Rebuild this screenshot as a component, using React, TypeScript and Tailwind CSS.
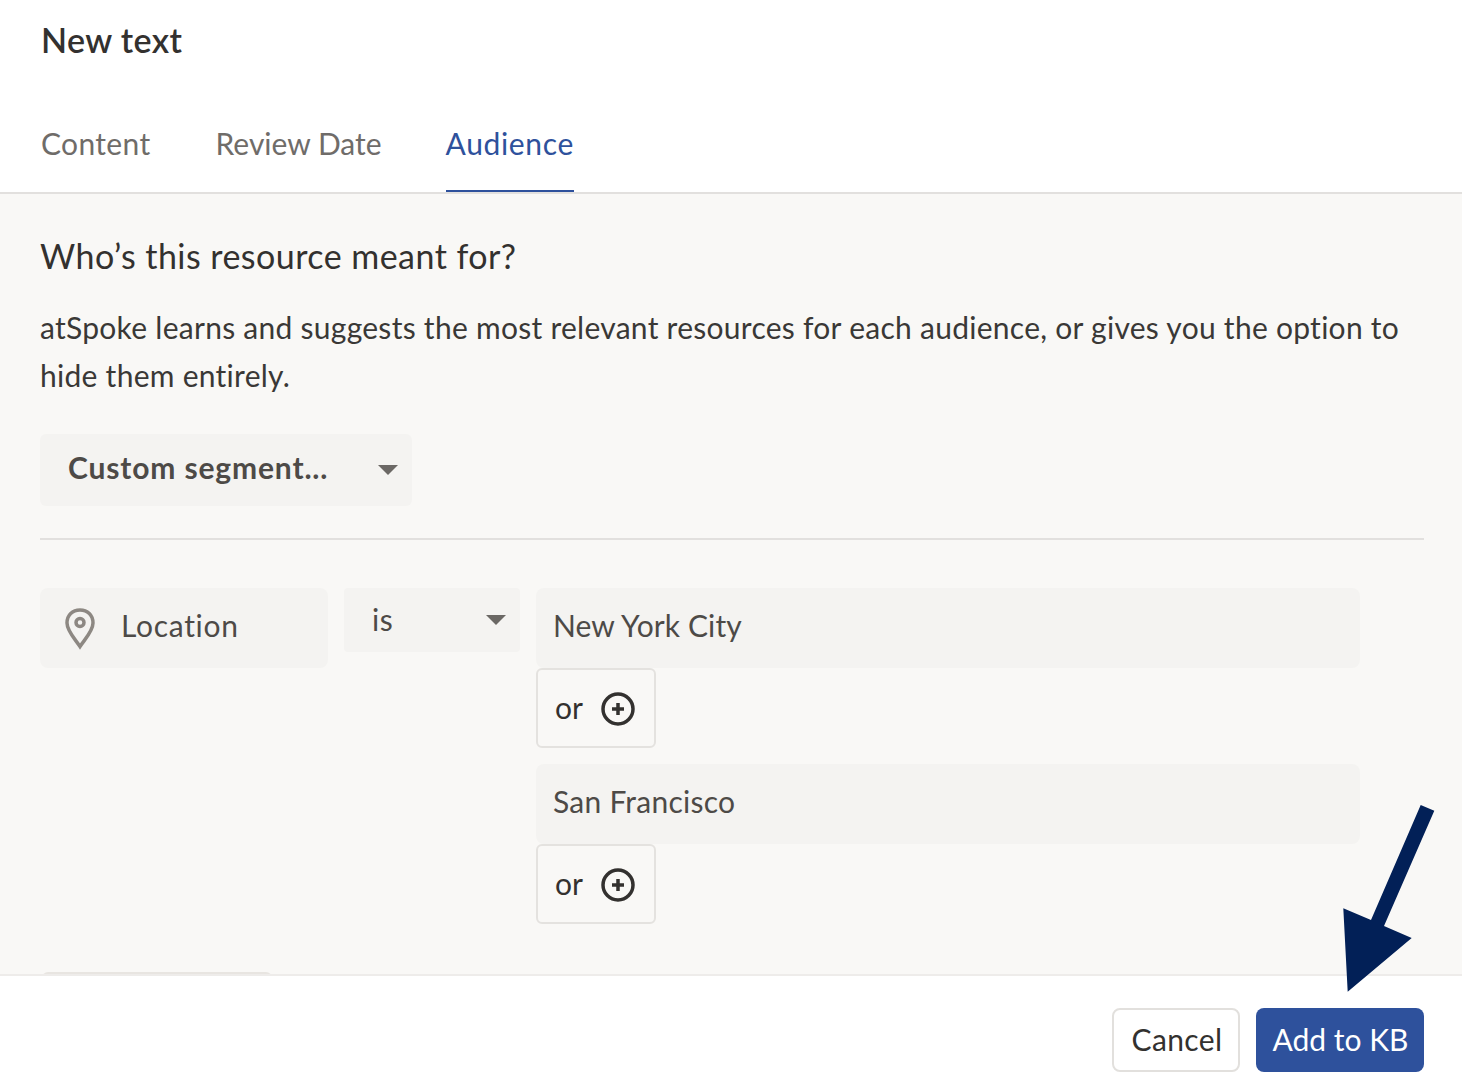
import React from "react";

function Caret({ className }: { className: string }) {
  return (
    <svg className={className} width="20" height="10" viewBox="0 0 20 10">
      <path d="M0 0H20L10 10Z" fill="#6b6865" />
    </svg>
  );
}

function Or() {
  return (
    <div className="flex h-20 w-[120px] items-center rounded-md border-2 border-[#e4e2df] pl-[17px] text-[30px] leading-none text-[#33312f]">
      <span className="pb-[2px]">or</span>
      <svg className="ml-[18px] mt-[2px]" width="34" height="34" viewBox="0 0 34 34" fill="none" stroke="#33312f">
        <circle cx="17" cy="17" r="15" strokeWidth="3.5" />
        <path d="M17 11V23M11 17H23" strokeWidth="3.5" />
      </svg>
    </div>
  );
}

export default function App() {
  return (
    <div className="relative flex h-[1090px] w-[1462px] flex-col overflow-hidden bg-white font-['Lato','Noto_Sans',sans-serif] text-[#33312f]">
      <header className="h-[194px] shrink-0 border-b-2 border-[#e2e0de] bg-white">
        <h1 className="pl-[41px] pt-[19px] text-[34px] font-semibold leading-[42px] tracking-[0.4px]">New text</h1>
        <nav className="mt-[62px] flex gap-[65px] pl-[41px] text-[30px] leading-[40px] text-[#6f6c69]">
          <span className="h-[69px] tracking-[0.35px]">Content</span>
          <span className="h-[69px] tracking-[0px]">Review Date</span>
          <span className="-ml-px h-[69px] border-b-2 border-[#2e519c] tracking-[0.65px] text-[#2e519c]">Audience</span>
        </nav>
      </header>

      <main className="h-[780px] shrink-0 overflow-hidden bg-[#f9f8f6] px-10 pt-[41px]">
        <h2 className="text-[34px] font-normal leading-[42px] tracking-[0.46px]">Who’s this resource meant for?</h2>
        <p className="mt-[27px] w-[1384px] text-[30px] leading-[47.5px] tracking-[0.27px] text-[#3a3836]">
          atSpoke learns and suggests the most relevant resources for each audience, or gives you the option to hide them entirely.
        </p>
        <div className="relative mt-[35px] flex h-[72px] w-[372px] items-center rounded-md bg-[#f4f3f1] pb-[5px] pl-[28px] text-[30px] font-bold tracking-[0.85px] text-[#4d4a47]">
          <span>Custom segment...</span>
          <Caret className="absolute right-[14px] top-[31px]" />
        </div>
        <div className="mt-[32px] h-0.5 w-[1384px] bg-[#e2e0de]" />
        <div className="mt-[48px] flex items-start gap-4">
          <div className="flex h-20 w-[288px] items-center rounded-lg bg-[#f4f3f1] pl-[25px] text-[30px] tracking-[0.7px] text-[#4d4a47]">
            <svg className="mt-[2px]" width="30" height="42" viewBox="0 0 30 42" fill="none" stroke="#8d8883" strokeWidth="3.5">
              <path d="M15 38.5C10 31 2 23 2 15C2 7 7.5 2 15 2C22.5 2 28 7 28 15C28 23 20 31 15 38.5Z" />
              <circle cx="15" cy="14.5" r="4" />
            </svg>
            <span className="ml-[26px] pb-[6px]">Location</span>
          </div>
          <div className="relative flex h-16 w-[176px] items-center rounded-sm bg-[#f4f3f1] pb-[2px] pl-[28px] text-[30px] tracking-[0.5px] text-[#4d4a47]">
            <span>is</span>
            <Caret className="absolute right-[14px] top-[27px]" />
          </div>
          <div className="flex w-[824px] flex-col">
            <div className="flex h-20 items-center rounded-lg bg-[#f4f3f1] pb-[6px] pl-[17px] text-[30px] tracking-[0.12px] text-[#4d4a47]">New York City</div>
            <Or />
            <div className="mt-4 flex h-20 items-center rounded-lg bg-[#f4f3f1] pb-[6px] pl-[17px] text-[30px] tracking-[0.25px] text-[#4d4a47]">San Francisco</div>
            <Or />
          </div>
        </div>
        <div className="ml-[2px] mt-[48px] h-10 w-[230px] rounded-md bg-[#e8e5e1]" />
      </main>

      <footer className="flex flex-1 items-start justify-end gap-4 border-t-2 border-[#eeecea] bg-white pr-[38px] pt-[32px]">
        <button className="flex h-16 w-32 items-center justify-center rounded-lg border-2 border-[#e2e0dd] bg-white pb-[2px] pl-[2px] text-[30px] tracking-[0.4px] text-[#33312f]">Cancel</button>
        <button className="flex h-16 w-[168px] items-center justify-center rounded-lg bg-[#2e519c] pb-[2px] pl-[1px] text-[30px] tracking-[0px] text-white">Add to KB</button>
      </footer>

      <svg className="absolute left-[1330px] top-[795px]" width="120" height="205" viewBox="1330 795 120 205">
        <path
          d="M1420.7 805L1434.3 810.7L1384 926L1411.7 938L1347.7 991.7L1343.3 908.3L1371 920Z"
          fill="#022057"
        />
      </svg>
    </div>
  );
}
